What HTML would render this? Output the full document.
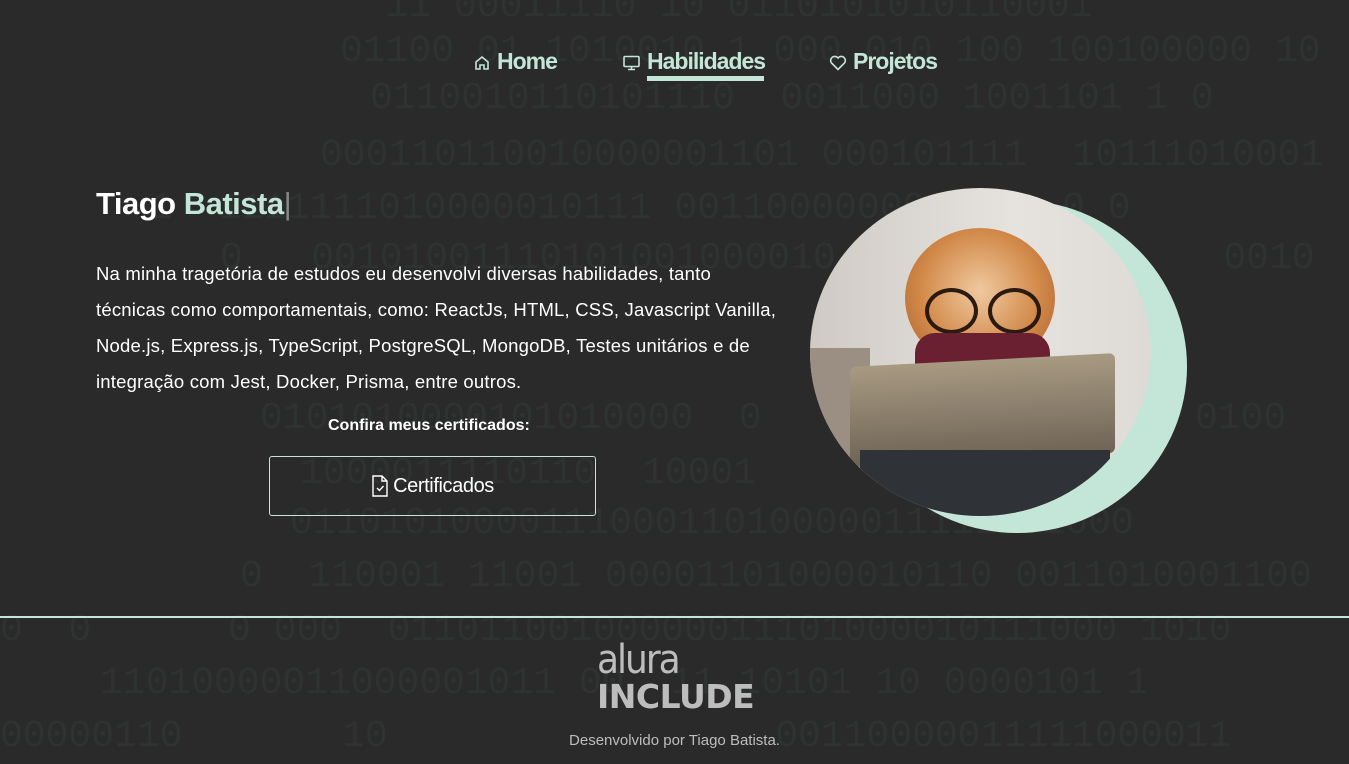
<!DOCTYPE html>
<html><head><meta charset="utf-8"><style>
html,body{margin:0;padding:0}
body{width:1349px;height:764px;background:#2a2a2a;overflow:hidden;position:relative;font-family:"Liberation Sans",sans-serif}
.bin{position:absolute;font-family:"Liberation Mono",monospace;font-size:38px;color:#2e3231;white-space:pre;line-height:1}
nav{position:absolute;top:46px;left:0;width:1349px;height:40px}
nav a{position:absolute;color:#c3e6d9;font-weight:bold;font-size:23px;text-decoration:none;letter-spacing:-1px}
nav svg{position:absolute}
.ul{position:absolute;left:647px;top:76px;width:117px;height:5px;background:#c3e6d9}
h1{position:absolute;left:96px;top:186px;margin:0;font-size:31px;color:#fff;font-weight:bold;letter-spacing:-0.5px}
h1 span{color:#c3e6d9}
p.t{position:absolute;left:96px;top:256px;width:700px;margin:0;color:#fff;font-size:18.5px;line-height:36px;letter-spacing:0.2px;white-space:nowrap}
.conf{position:absolute;left:328px;top:417px;color:#fff;font-weight:bold;font-size:16px}
.btn{position:absolute;left:269px;top:456px;width:327px;height:60px;border:1.5px solid #c3e6d9;border-radius:3px;color:#fff;font-size:20px;box-sizing:border-box;display:flex;align-items:center;justify-content:center;gap:4px;letter-spacing:-0.4px}
.moon{position:absolute;left:847px;top:200px;width:340px;height:333px;border-radius:50%;background:#c3e6d9}
.photo{position:absolute;left:810px;top:188px;width:341px;height:328px;border-radius:50%;overflow:hidden;background:linear-gradient(90deg,#cfcac4,#e6e3df 60%,#dedad6)}
.line{position:absolute;top:616px;left:0;width:1349px;height:2px;background:#c3e6d9}
.logo{position:absolute;left:597px;top:640px;color:#bdbdbd;font-weight:bold}
.dev{position:absolute;left:0;width:1349px;top:732px;text-align:center;color:#bdbdbd;font-size:15px}
</style></head><body>
<div class="bin" style="left:340px;top:-12px">  11 00011110 10 0110101010110001</div>
<div class="bin" style="left:340px;top:33px">01100 01 1010010 1 000 010 100 100100000 10</div>
<div class="bin" style="left:370px;top:80px">0110010110101110  0011000 1001101 1 0</div>
<div class="bin" style="left:320px;top:137px">000110110010000001101 000101111  10111010001</div>
<div class="bin" style="left:150px;top:190px">1  1111111010000010111 0011000000000011 0 0</div>
<div class="bin" style="left:220px;top:240px">0   00101001110101001000010    0 1 0 1 0    0010</div>
<div class="bin" style="left:260px;top:400px">0101010000101010000  0                   0100</div>
<div class="bin" style="left:300px;top:455px">1000011110110  10001</div>
<div class="bin" style="left:290px;top:505px">0110101000011100011010000011111 01000</div>
<div class="bin" style="left:240px;top:558px">0  110001 11001 00001101000010110 0011010001100</div>
<div class="bin" style="left:0px;top:612px">0  0      0 000  01101100100000011101000010111000 1010</div>
<div class="bin" style="left:100px;top:665px">11010000011000001011 00  11 10101 10 0000101 1</div>
<div class="bin" style="left:0px;top:718px">00000110       10                 00110000011111000011</div>

<nav>
<svg style="left:474px;top:9px" width="16" height="16" viewBox="0 0 16 16" fill="none" stroke="#c3e6d9" stroke-width="1.6"><path d="M2 7L8 2l6 5v7h-4v-4H6v4H2z"/></svg>
<a style="left:497px;top:2px">Home</a>
<svg style="left:623px;top:9px" width="17" height="16" viewBox="0 0 17 16" fill="none" stroke="#c3e6d9" stroke-width="1.6"><rect x="1" y="1.5" width="15" height="10" rx="1"/><path d="M5 14.5h7M8.5 11.5v3"/></svg>
<a style="left:647px;top:2px">Habilidades</a>
<svg style="left:829px;top:9px" width="18" height="16" viewBox="0 0 18 16" fill="none" stroke="#c3e6d9" stroke-width="1.6"><path d="M9 14.5L2.5 8A3.8 3.8 0 019 3a3.8 3.8 0 016.5 5z"/></svg>
<a style="left:853px;top:2px">Projetos</a>
</nav>
<div class="ul"></div>

<h1>Tiago <span>Batista</span><span style="color:#888;font-weight:normal">|</span></h1>
<p class="t">Na minha tragetória de estudos eu desenvolvi diversas habilidades, tanto<br>técnicas como comportamentais, como: ReactJs, HTML, CSS, Javascript Vanilla,<br>Node.js, Express.js, TypeScript, PostgreSQL, MongoDB, Testes unitários e de<br>integração com Jest, Docker, Prisma, entre outros.</p>
<div class="conf">Confira meus certificados:</div>
<div class="btn"><svg width="18" height="22" viewBox="0 0 18 22" fill="none" stroke="#fff" stroke-width="1.4"><path d="M2 1h9l5 5v15H2z"/><path d="M11 1v5h5M6 13l2.5 2.5L12.5 11"/></svg>Certificados</div>

<div class="moon"></div>
<div class="photo">
 <div style="position:absolute;left:0;top:160px;width:60px;height:170px;background:#9a8f82"></div>
 <div style="position:absolute;left:95px;top:40px;width:150px;height:140px;border-radius:50%;background:radial-gradient(circle at 50% 45%,#f0c9a0,#d28a4a 55%,#a85a28)"></div>
 <div style="position:absolute;left:115px;top:100px;width:45px;height:38px;border:4px solid #2a1a12;border-radius:50%"></div>
 <div style="position:absolute;left:178px;top:100px;width:45px;height:38px;border:4px solid #2a1a12;border-radius:50%"></div>
 <div style="position:absolute;left:105px;top:145px;width:135px;height:40px;background:#6a2030;border-radius:20px 20px 0 0"></div>
 <div style="position:absolute;left:40px;top:172px;width:265px;height:100px;background:linear-gradient(180deg,#a89a82,#6e6355);transform:skewY(-3deg);border-radius:6px"></div>
 <div style="position:absolute;left:50px;top:262px;width:250px;height:70px;background:#2f3236"></div>
</div>

<div class="line"></div>
<div class="logo"><div style="font-size:40px;font-weight:normal;letter-spacing:-2px;line-height:40px;font-family:'DejaVu Sans Condensed','Liberation Sans',sans-serif">alura</div><div style="font-size:33px;line-height:34px;letter-spacing:-0.5px;font-family:'DejaVu Sans','Liberation Sans',sans-serif">INCLUDE</div></div>
<div class="dev">Desenvolvido por Tiago Batista.</div>
</body></html>
